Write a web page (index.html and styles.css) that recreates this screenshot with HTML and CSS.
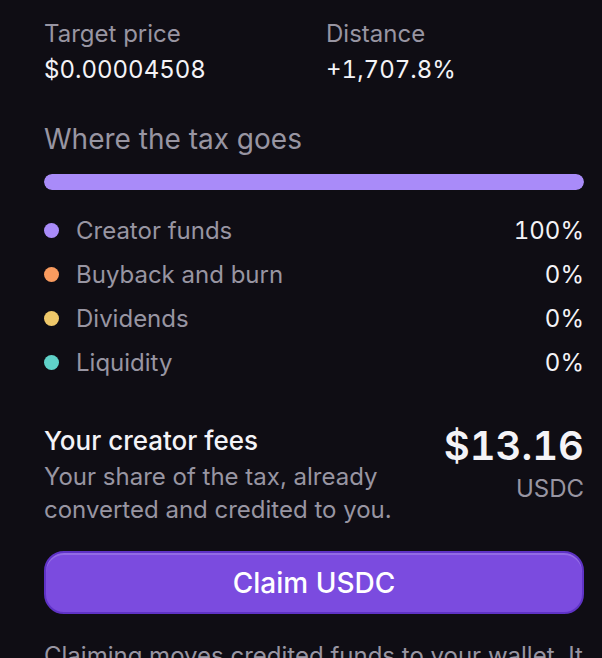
FILE: index.html
```html
<!DOCTYPE html>
<html lang="en">
<head>
<meta charset="utf-8">
<title>Creator fees</title>
<link rel="stylesheet" href="styles.css">
</head>
<body>
<main class="panel">
  <section class="stats">
    <div class="stat">
      <div class="stat-label">Target price</div>
      <div class="stat-value">$0.00004508</div>
    </div>
    <div class="stat">
      <div class="stat-label">Distance</div>
      <div class="stat-value">+1,707.8%</div>
    </div>
  </section>

  <h2 class="section-title">Where the tax goes</h2>
  <div class="bar"><div class="bar-fill bar-creator" style="width:100%"></div></div>

  <ul class="split">
    <li class="split-row"><span class="dot dot-creator"></span><span class="split-name">Creator funds</span><span class="split-pct">100%</span></li>
    <li class="split-row"><span class="dot dot-buyback"></span><span class="split-name">Buyback and burn</span><span class="split-pct">0%</span></li>
    <li class="split-row"><span class="dot dot-dividends"></span><span class="split-name">Dividends</span><span class="split-pct">0%</span></li>
    <li class="split-row"><span class="dot dot-liquidity"></span><span class="split-name">Liquidity</span><span class="split-pct">0%</span></li>
  </ul>

  <section class="fees">
    <div class="fees-text">
      <div class="fees-title">Your creator fees</div>
      <p class="fees-desc">Your share of the tax, already converted and credited to you.</p>
    </div>
    <div class="fees-amount">
      <div class="amount">$13.16</div>
      <div class="currency">USDC</div>
    </div>
  </section>

  <button class="claim" type="button">Claim USDC</button>

  <p class="note">Claiming moves credited funds to your wallet. It can take a few moments for the transfer to confirm.</p>
</main>
</body>
</html>
```
FILE: styles.css
```css
* { box-sizing: border-box; }

html, body {
  margin: 0;
  padding: 0;
  background: #0f0d14;
}

body {
  font-family: Inter, "Noto Sans", "Liberation Sans", sans-serif;
  color: #f4f3f7;
  overflow: hidden;
}

.panel {
  padding: 18px 18px 0 44px;
}

.stats {
  display: grid;
  grid-template-columns: 1fr 1fr;
  column-gap: 24px;
}

.stat {
  display: flex;
  flex-direction: column;
  gap: 4px;
}

.stat-label {
  font-size: 24px;
  line-height: 32px;
  color: #9895a2;
}

.stat-value {
  font-size: 24px;
  line-height: 32px;
  color: #f4f3f7;
  font-variant-numeric: tabular-nums;
}

.section-title {
  margin: 35px 0 0;
  font-size: 28px;
  line-height: 36px;
  font-weight: 400;
  color: #9895a2;
}

.bar {
  margin-top: 17px;
  height: 16px;
  border-radius: 8px;
  background: #2a2733;
  overflow: hidden;
}

.bar-fill {
  height: 100%;
  border-radius: 8px;
}

.bar-creator { background: #a98bf9; }

.split {
  list-style: none;
  margin: 18px 0 0;
  padding: 0;
}

.split-row {
  display: flex;
  align-items: center;
  height: 44px;
  font-size: 24px;
}

.dot {
  width: 15px;
  height: 15px;
  border-radius: 50%;
  flex: none;
  margin-right: 17px;
}

.dot-creator { background: #a98bf9; }
.dot-buyback { background: #f99b5f; }
.dot-dividends { background: #efc86a; }
.dot-liquidity { background: #5fd1c8; }

.split-name {
  flex: 1;
  color: #9895a2;
}

.split-pct {
  color: #f4f3f7;
  font-variant-numeric: tabular-nums;
}

.fees {
  margin-top: 41px;
  display: flex;
  justify-content: space-between;
  align-items: flex-start;
  gap: 16px;
}

.fees-text {
  max-width: 380px;
}

.fees-title {
  font-size: 26px;
  line-height: 32px;
  font-weight: 500;
  color: #f4f3f7;
}

.fees-desc {
  margin: 3px 0 0;
  font-size: 24px;
  line-height: 33px;
  color: #9895a2;
}

.fees-amount {
  text-align: right;
  margin-top: -1px;
}

.amount {
  font-size: 40px;
  line-height: 44px;
  font-weight: 600;
  color: #f4f3f7;
  font-variant-numeric: tabular-nums;
}

.currency {
  margin-top: 5px;
  font-size: 24px;
  line-height: 32px;
  color: #9895a2;
}

.claim {
  display: block;
  width: 100%;
  margin-top: 25px;
  height: 63px;
  border: 2px solid #5f33c6;
  border-radius: 20px;
  background: #7b4bdf;
  box-shadow: inset 0 2px 0 rgba(255, 255, 255, 0.18);
  color: #ffffff;
  font-family: Inter, "Noto Sans", "Liberation Sans", sans-serif;
  font-size: 28px;
  font-weight: 500;
  cursor: pointer;
}

.note {
  margin: 26px 0 0;
  font-size: 24px;
  line-height: 32px;
  color: #9895a2;
}
```
